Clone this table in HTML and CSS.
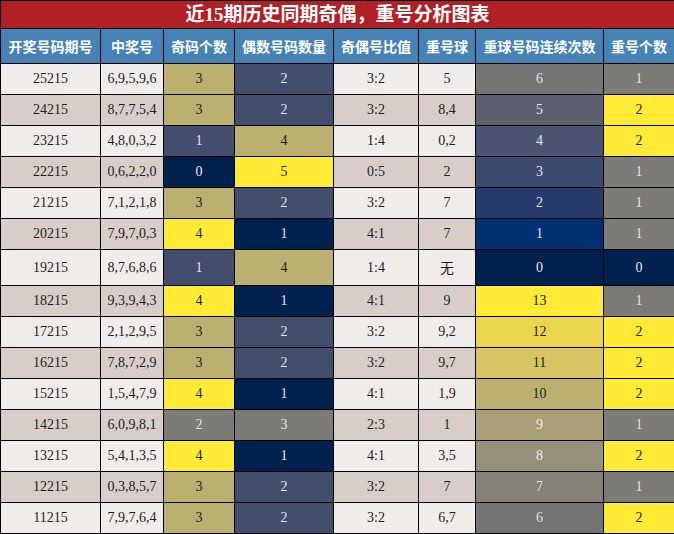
FILE: index.html
```html
<!DOCTYPE html>
<html lang="zh">
<head>
<meta charset="utf-8">
<link rel="stylesheet" href="styles.css">
</head>
<body>
<table class="chart">
<colgroup>
<col class="w1"><col class="w2"><col class="w3"><col class="w4"><col class="w5"><col class="w6"><col class="w7"><col class="w8">
</colgroup>
<thead>
<tr><th colspan="8" class="title">近15期历史同期奇偶，重号分析图表</th></tr>
<tr class="head">
<th>开奖号码期号</th><th>中奖号</th><th>奇码个数</th><th>偶数号码数量</th><th>奇偶号比值</th><th>重号球</th><th>重球号码连续次数</th><th>重号个数</th>
</tr>
</thead>
<tbody>
<tr class="lt"><td>25215</td><td>6,9,5,9,6</td><td class="khaki">3</td><td class="slate">2</td><td>3:2</td><td>5</td><td class="r6">6</td><td class="gray">1</td></tr>
<tr class="dk"><td>24215</td><td>8,7,7,5,4</td><td class="khaki">3</td><td class="slate">2</td><td>3:2</td><td>8,4</td><td class="r5">5</td><td class="yellow">2</td></tr>
<tr class="lt"><td>23215</td><td>4,8,0,3,2</td><td class="slate">1</td><td class="khaki">4</td><td>1:4</td><td>0,2</td><td class="r4">4</td><td class="yellow">2</td></tr>
<tr class="dk"><td>22215</td><td>0,6,2,2,0</td><td class="navy">0</td><td class="yellow">5</td><td>0:5</td><td>2</td><td class="r3">3</td><td class="gray">1</td></tr>
<tr class="lt"><td>21215</td><td>7,1,2,1,8</td><td class="khaki">3</td><td class="slate">2</td><td>3:2</td><td>7</td><td class="r2">2</td><td class="gray">1</td></tr>
<tr class="dk"><td>20215</td><td>7,9,7,0,3</td><td class="yellow">4</td><td class="navy">1</td><td>4:1</td><td>7</td><td class="r1">1</td><td class="gray">1</td></tr>
<tr class="lt"><td>19215</td><td>8,7,6,8,6</td><td class="slate">1</td><td class="khaki">4</td><td>1:4</td><td class="none">无</td><td class="navy">0</td><td class="navy">0</td></tr>
<tr class="dk"><td>18215</td><td>9,3,9,4,3</td><td class="yellow">4</td><td class="navy">1</td><td>4:1</td><td>9</td><td class="yellow">13</td><td class="gray">1</td></tr>
<tr class="lt"><td>17215</td><td>2,1,2,9,5</td><td class="khaki">3</td><td class="slate">2</td><td>3:2</td><td>9,2</td><td class="r12">12</td><td class="yellow">2</td></tr>
<tr class="dk"><td>16215</td><td>7,8,7,2,9</td><td class="khaki">3</td><td class="slate">2</td><td>3:2</td><td>9,7</td><td class="r11">11</td><td class="yellow">2</td></tr>
<tr class="lt"><td>15215</td><td>1,5,4,7,9</td><td class="yellow">4</td><td class="navy">1</td><td>4:1</td><td>1,9</td><td class="r10">10</td><td class="yellow">2</td></tr>
<tr class="dk"><td>14215</td><td>6,0,9,8,1</td><td class="gray">2</td><td class="gray">3</td><td>2:3</td><td>1</td><td class="r9">9</td><td class="gray">1</td></tr>
<tr class="lt"><td>13215</td><td>5,4,1,3,5</td><td class="yellow">4</td><td class="navy">1</td><td>4:1</td><td>3,5</td><td class="r8">8</td><td class="yellow">2</td></tr>
<tr class="dk"><td>12215</td><td>0,3,8,5,7</td><td class="khaki">3</td><td class="slate">2</td><td>3:2</td><td>7</td><td class="r7">7</td><td class="gray">1</td></tr>
<tr class="lt"><td>11215</td><td>7,9,7,6,4</td><td class="khaki">3</td><td class="slate">2</td><td>3:2</td><td>6,7</td><td class="r6">6</td><td class="yellow">2</td></tr>
</tbody>
</table>
</body>
</html>
```

FILE: styles.css
```css
html, body {
  margin: 0;
  padding: 0;
  background: #ffffff;
}

.chart {
  border-collapse: collapse;
  table-layout: fixed;
  width: 674px;
  font-family: "Liberation Serif", "Noto Sans CJK SC", serif;
  font-size: 14px;
  color: #1e1e1e;
}

.w1 { width: 100px; }
.w2 { width: 63px; }
.w3 { width: 71px; }
.w4 { width: 99px; }
.w5 { width: 85px; }
.w6 { width: 57px; }
.w7 { width: 128px; }
.w8 { width: 71px; }

.chart th,
.chart td {
  border: 1px solid #000;
  text-align: center;
  padding: 7px 0;
  white-space: nowrap;
}

.chart .title {
  background: #b12025;
  color: #ffffff;
  font-size: 19px;
  font-weight: bold;
  line-height: 27px;
  padding: 0;
}

.head th {
  background: #4682b4;
  color: #ffffff;
  font-family: "Noto Sans CJK SC", sans-serif;
  font-weight: bold;
  font-size: 14px;
  line-height: 20px;
  padding: 7px 0 7px;
}

.chart td.none {
  padding: 7px 0 8px;
}

.lt td { background: #f0ece9; }
.dk td { background: #d8cdc9; }

.chart td.khaki { background: #bcb071; color: #1e1e1e; }
.chart td.slate { background: #424e6c; color: #e4e6ea; }
.chart td.navy { background: #00214d; color: #e4e6ea; }
.chart td.yellow { background: #ffea35; color: #1e1e1e; }
.chart td.gray { background: #7c7b76; color: #e4e4e4; }

.chart td.r1 { background: #002f72; color: #e4e6ea; }
.chart td.r2 { background: #283c6c; color: #e4e6ea; }
.chart td.r3 { background: #3b4a6e; color: #e4e6ea; }
.chart td.r4 { background: #4b5470; color: #e4e6ea; }
.chart td.r5 { background: #5c5f6d; color: #e4e6ea; }
.chart td.r6 { background: #747474; color: #e4e4e4; }
.chart td.r7 { background: #858179; color: #e4e4e4; }
.chart td.r8 { background: #969078; color: #ececec; }
.chart td.r9 { background: #a99f76; color: #ececec; }
.chart td.r10 { background: #bdb06f; color: #1e1e1e; }
.chart td.r11 { background: #d7c563; color: #1e1e1e; }
.chart td.r12 { background: #ecd64d; color: #1e1e1e; }
```
